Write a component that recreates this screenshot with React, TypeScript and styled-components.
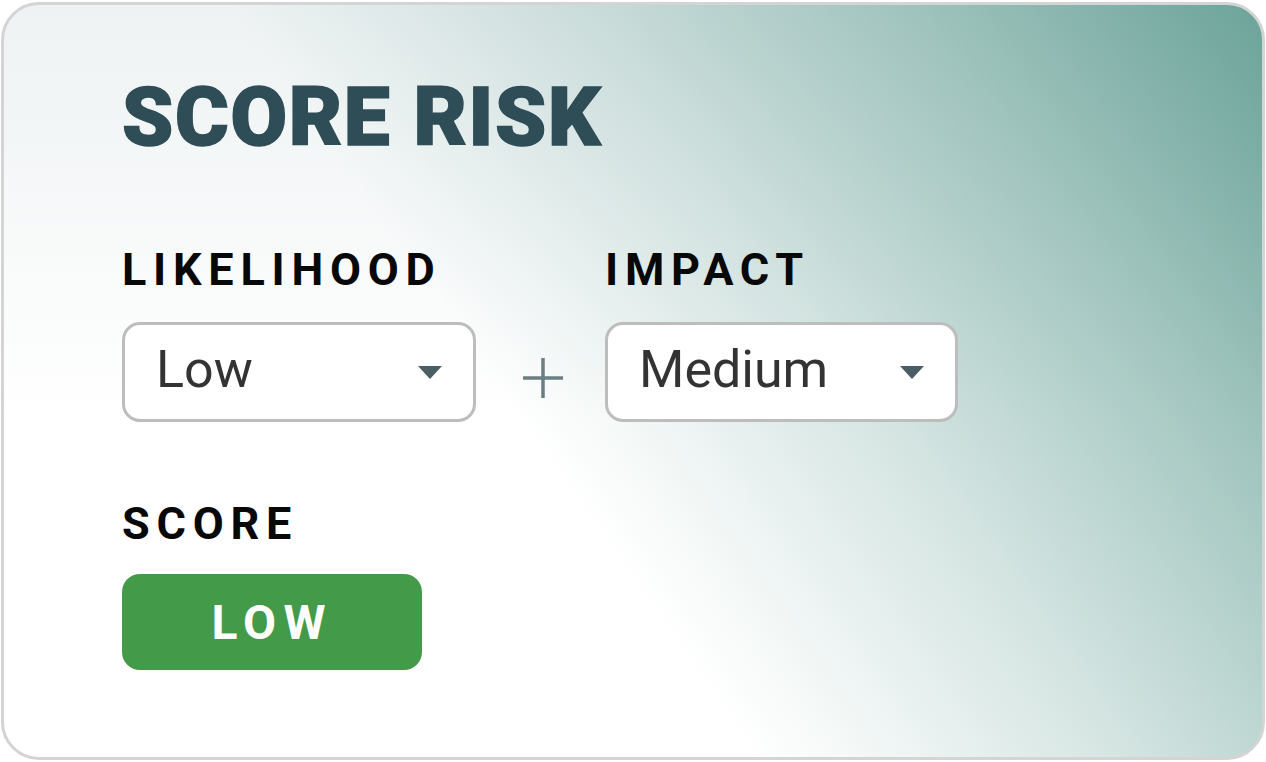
import React from 'react';
import styled, { createGlobalStyle } from 'styled-components';

const GlobalStyle = createGlobalStyle`
  html, body {
    margin: 0;
    padding: 0;
    background: #ffffff;
  }
  body {
    font-family: Roboto, "Liberation Sans", Arial, sans-serif;
  }
  * {
    box-sizing: border-box;
  }
`;

const Page = styled.div`
  width: 1266px;
  height: 762px;
  padding: 2px 1px;
`;

const Card = styled.section`
  height: 100%;
  border: 3px solid #d4d4d4;
  border-radius: 38px;
  padding: 71px 0 0 118px;
  background:
    linear-gradient(
      55deg,
      rgba(108, 164, 154, 0) 42%,
      rgba(108, 164, 154, 0.1) 50%,
      rgba(108, 164, 154, 0.28) 62%,
      rgba(108, 164, 154, 0.6) 80%,
      rgba(108, 164, 154, 1) 100%
    ),
    linear-gradient(180deg, #eef2f3 0%, #ffffff 55%);
`;

const Title = styled.h1`
  margin: 0;
  font-size: 82px;
  line-height: 1;
  font-weight: 900;
  letter-spacing: 0.02em;
  color: #2e4d56;
  -webkit-text-stroke: 1.5px #2e4d56;
`;

const Fields = styled.div`
  display: grid;
  grid-template-columns: 354px 129px 353px;
  row-gap: 30px;
  margin-top: 89px;
`;

const Label = styled.div<{ $col?: number }>`
  grid-column: ${({ $col }) => $col ?? 'auto'};
  font-size: 45px;
  line-height: 1;
  font-weight: 700;
  letter-spacing: 0.15em;
  color: #080808;
`;

const Select = styled.div`
  height: 100px;
  display: flex;
  align-items: center;
  justify-content: space-between;
  padding: 0 31px 6px 31px;
  background: #ffffff;
  border: 3px solid #bdbdbd;
  border-radius: 18px;
  font-size: 52px;
  font-weight: 400;
  color: #333333;
`;

const Caret = styled.svg`
  width: 24px;
  height: 13px;
  margin-top: 6px;
  fill: #4b5e63;
`;

const Plus = styled.svg`
  justify-self: center;
  align-self: center;
  width: 40px;
  height: 40px;
  margin: 12px 0 0 4px;
  stroke: #6b7e82;
  stroke-width: 3.5;
`;

const ScoreLabel = styled(Label)`
  margin-top: 79px;
`;

const Badge = styled.div`
  width: 300px;
  height: 96px;
  margin-top: 28px;
  display: flex;
  align-items: center;
  justify-content: center;
  background: #439a48;
  border-radius: 18px;
  color: #ffffff;
  font-size: 48px;
  font-weight: 700;
  letter-spacing: 0.15em;
`;

const Dropdown: React.FC<{ value: string }> = ({ value }) => (
  <Select>
    <span>{value}</span>
    <Caret viewBox="0 0 24 13">
      <polygon points="0,0 24,0 12,13" />
    </Caret>
  </Select>
);

const App: React.FC = () => (
  <>
    <GlobalStyle />
    <Page>
      <Card>
        <Title>SCORE RISK</Title>
        <Fields>
          <Label $col={1}>LIKELIHOOD</Label>
          <Label $col={3}>IMPACT</Label>
          <Dropdown value="Low" />
          <Plus viewBox="0 0 40 40">
            <line x1="20" y1="0" x2="20" y2="40" />
            <line x1="0" y1="20" x2="40" y2="20" />
          </Plus>
          <Dropdown value="Medium" />
        </Fields>
        <ScoreLabel>SCORE</ScoreLabel>
        <Badge>LOW</Badge>
      </Card>
    </Page>
  </>
);

export default App;
